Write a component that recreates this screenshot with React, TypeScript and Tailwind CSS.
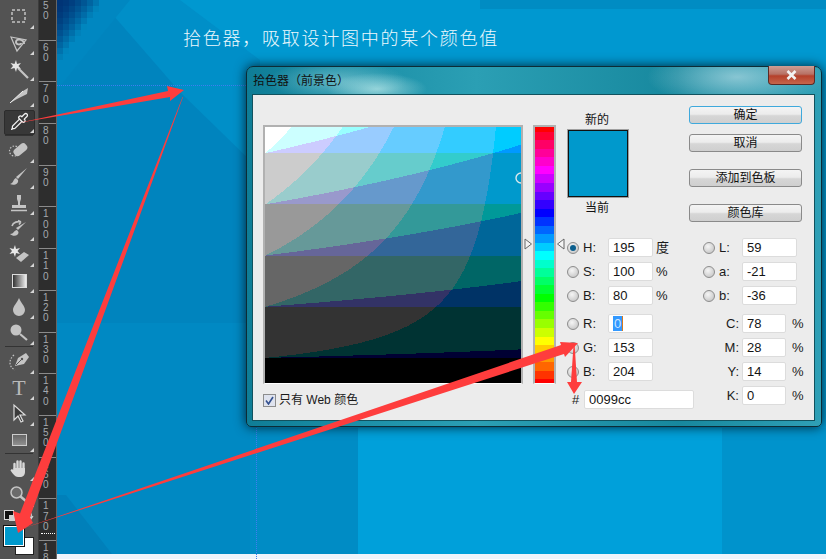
import { Pipette } from "lucide-react";
import type { ReactNode } from "react";

const quant = (v: number) => Math.round(v * 5) * 51;
const hex = (r: number, g: number, b: number) => `rgb(${r},${g},${b})`;

// web-safe colour field for H=195, built as one path per colour
const fieldPaths = () => {
  const map = new Map<string, string>();
  for (let y = 0; y < 256; y++) {
    const v = 1 - y / 256;
    let start = 0;
    let prev = "";
    for (let x = 0; x <= 256; x++) {
      const s = x / 256;
      const c = x === 256 ? "" : hex(quant(v * (1 - s)), quant(v * (1 - 0.25 * s)), quant(v));
      if (c !== prev) {
        if (prev) map.set(prev, (map.get(prev) ?? "") + `M${start} ${y}h${x - start}v1h-${x - start}z`);
        start = x;
        prev = c;
      }
    }
  }
  return [...map.entries()];
};

const hueRows = () => {
  const rows: { y: number; h: number; c: string }[] = [];
  for (let y = 0; y < 256; y++) {
    const h = ((256 - y) / 256) * 6;
    const x = 1 - Math.abs((h % 2) - 1);
    const t = [
      [1, x, 0],
      [x, 1, 0],
      [0, 1, x],
      [0, x, 1],
      [x, 0, 1],
      [1, 0, x],
    ][Math.min(5, Math.floor(h))];
    const c = hex(quant(t[0]), quant(t[1]), quant(t[2]));
    const last = rows[rows.length - 1];
    if (last && last.c === c) last.h += 1;
    else rows.push({ y, h: 1, c });
  }
  return rows;
};

const cornerBlocks = () => {
  const out: { x: number; y: number; c: string }[] = [];
  for (let y = 0; y < 63; y += 6) {
    for (let x = 57; x < 120; x += 6) {
      const d = (x - 57) / 42 + y / 58;
      if (d < 1) {
        const k = Math.pow(d, 1.6);
        out.push({ x, y, c: `rgb(0,${Math.round(52 + k * 84)},${Math.round(118 + k * 74)})` });
      }
    }
  }
  return out;
};

const Wallpaper = () => (
  <svg className="absolute inset-0 w-[769px] h-[554px]" viewBox="57 0 769 554" shapeRendering="crispEdges">
    <rect x="57" y="0" width="769" height="554" fill="#0098d0" />
    <rect x="480" y="0" width="346" height="9" fill="#008cc3" />
    <polygon points="57,0 100,0 260,170 260,323 57,323" fill="#0084be" shapeRendering="auto" />
    <polygon points="100,0 180,92 260,170 260,60 180,0" fill="#008fc8" shapeRendering="auto" />
    <polygon points="57,0 130,0 57,90" fill="#0087c1" shapeRendering="auto" />
    <rect x="57" y="323" width="200" height="231" fill="#0089c3" />
    <rect x="250" y="428" width="110" height="126" fill="#008cc5" />
    <rect x="358" y="428" width="364" height="126" fill="#00a0da" />
    <rect x="722" y="428" width="104" height="126" fill="#0093cc" />
    <polygon points="57,495 66,495 112,554 57,554" fill="#0080ba" shapeRendering="auto" />
    {cornerBlocks().map((b) => (
      <rect key={`${b.x}-${b.y}`} x={b.x} y={b.y} width="6" height="6" fill={b.c} />
    ))}
  </svg>
);

const Arrows = () => (
  <svg className="absolute left-0 top-0 w-[826px] h-[559px] pointer-events-none" viewBox="0 0 826 559">
    <g fill="#fe3d3d">
      <polygon points="18,123 168,91 167,86 184,90 170,101 170,97" />
      <polygon points="183,97 30,517 33,523 18,533 13,511 20,513.5 182.5,97" />
      <polygon points="18,530 561,345 560,342 578,343 565,357 564,354" />
      <polygon points="573.6,344 574.6,344 577,382 582,382 574,394 567,382 571,382" />
    </g>
  </svg>
);

const Tool = ({ children, active }: { children: ReactNode; active?: boolean }) => (
  <div className="relative h-[26px] w-full flex items-center justify-center">
    {active && <div className="absolute left-[4px] right-[3px] top-[2px] bottom-[-1px] bg-[#383838] border border-[#2c2c2c] rounded-[2px]" />}
    <span className="relative flex items-center justify-center text-[#c4c4c4]">{children}</span>
    <span className="absolute right-[4px] bottom-[1px] w-0 h-0 border-l-[4px] border-l-transparent border-b-[4px] border-b-[#d5d5d5]" />
  </div>
);

const Ico = ({ children }: { children: ReactNode }) => (
  <svg width="22" height="22" viewBox="0 0 22 22" fill="none" stroke="currentColor" strokeWidth="1.3">
    {children}
  </svg>
);

const Sep = () => <div className="mx-[5px] h-[2px] border-t border-[#333] border-b-[#666] shrink-0" />;

const Toolbar = () => (
  <div className="w-[39px] h-[559px] bg-[#535353] border-r border-[#3c3c3c] shrink-0 flex flex-col pt-[4px] relative">
    <Tool>
      <Ico>
        <rect x="4" y="4" width="13" height="12" strokeDasharray="3 2" strokeWidth="1.5" />
      </Ico>
    </Tool>
    <Tool>
      <Ico>
        <path d="M3 5 L18 8 L9 19 Z" strokeWidth="1.2" />
        <path d="M16 12 C16 7 8 6 8 10 C8 13 13 13 13 11" strokeWidth="2" />
      </Ico>
    </Tool>
    <Tool>
      <Ico>
        <path d="M10 10 L20 20" strokeWidth="2.2" />
        <path d="M8 2 L9 6 L13 5 L10.5 8 L13 11 L9 10 L8 14 L6.5 10 L2.5 11 L5 8 L2.5 5 L6.5 6 Z" fill="#e4e4e4" stroke="none" />
      </Ico>
    </Tool>
    <Tool>
      <Ico>
        <path d="M2 19 L15 7 L20 4 L19 10 L9 15 Z" fill="currentColor" stroke="none" />
        <path d="M2 19 L15 7" stroke="#eee" strokeWidth="1" />
      </Ico>
    </Tool>
    <Tool active>
      <Pipette size={19} strokeWidth={1.6} className="text-[#f0f0f0]" />
    </Tool>
    <div className="mt-[1px] mb-[1px]"><Sep /></div>
    <Tool>
      <Ico>
        <rect x="5" y="6" width="15" height="8" rx="3.5" transform="rotate(-40 12 10)" fill="currentColor" stroke="none" />
        <circle cx="6.5" cy="11" r="5" strokeDasharray="1.5 1.5" strokeWidth="1.2" />
      </Ico>
    </Tool>
    <Tool>
      <Ico>
        <path d="M19 2 L10 13 L8 11 Z" fill="currentColor" stroke="none" />
        <path d="M8 12 C5 13 6 17 2 18 C6 20 11 18 10 14 Z" fill="currentColor" stroke="none" />
      </Ico>
    </Tool>
    <Tool>
      <Ico>
        <path d="M9 3 h4 v4 l-1 3 v3 h6 v3 H4 v-3 h6 v-3 l-1 -3 Z" fill="currentColor" stroke="none" />
        <path d="M3 18.5 H19" strokeWidth="1.5" />
      </Ico>
    </Tool>
    <Tool>
      <Ico>
        <path d="M18 4 L10 12 L8 10 Z" fill="currentColor" stroke="none" />
        <path d="M9 12 C6 12 6 16 2 16 C5 19 11 18 10.5 14 Z" fill="currentColor" stroke="none" />
        <path d="M4 8 C5 4 10 3 13 4 M13 4 L10 2.5 M13 4 L11 6.5" strokeWidth="1.6" />
      </Ico>
    </Tool>
    <Tool>
      <Ico>
        <path d="M7 1 L8 5 L12 4 L9.5 7 L12 10 L8 9 L7 13 L5.5 9 L1.5 10 L4 7 L1.5 4 L5.5 5 Z" fill="#e8e8e8" stroke="none" />
        <path d="M8 14 L16 8 L21 11 L13 18 Z" fill="currentColor" stroke="none" />
      </Ico>
    </Tool>
    <Tool>
      <div className="w-[15px] h-[14px] border border-[#ddd] bg-[linear-gradient(90deg,#333,#eee)]" />
    </Tool>
    <Tool>
      <Ico>
        <path d="M11 2 C13 7 17 10 17 14 A6 6 0 0 1 5 14 C5 10 9 7 11 2 Z" fill="currentColor" stroke="none" />
      </Ico>
    </Tool>
    <Tool>
      <Ico>
        <circle cx="8" cy="8" r="5.5" fill="currentColor" stroke="none" />
        <path d="M12 12 L19 18" strokeWidth="2.2" />
      </Ico>
    </Tool>
    <Sep />
    <div className="mt-[1px]" />
    <Tool>
      <Ico>
        <path d="M7 15 L10 7 L18 2 L21 6 L16 13 Z" fill="currentColor" stroke="none" />
        <path d="M8 14 L14 8" stroke="#535353" strokeWidth="1" />
        <circle cx="14" cy="8" r="1.2" fill="#535353" stroke="none" />
        <path d="M6 4 C0 9 1 16 7 19" strokeDasharray="1.5 1.5" strokeWidth="1.2" />
      </Ico>
    </Tool>
    <Tool>
      <span className="font-['Liberation_Serif',serif] text-[22px] leading-none text-[#b9b9b9]">T</span>
    </Tool>
    <Tool>
      <Ico>
        <path d="M6 2 L6 17 L10 13 L13 19 L15 18 L12 12 L17 12 Z" stroke="#ddd" fill="#3a3a3a" strokeWidth="1.2" />
      </Ico>
    </Tool>
    <Tool>
      <div className="w-[15px] h-[12px] border border-[#ccc] bg-[linear-gradient(180deg,#666,#8f8f8f)]" />
    </Tool>
    <Sep />
    <div className="mt-[1px]" />
    <Tool>
      <Ico>
        <path d="M6.5 12 V6 M9.5 11 V3.5 M12.5 11 V3.5 M15.5 11.5 V5.5" strokeWidth="2.4" strokeLinecap="round" stroke="#d8d8d8" />
        <path d="M5.5 10 H17 V14 C17 17 15 19 12 19 H10 C7 19 5 16 2.5 12.5 C3 11 4.5 11 5.5 12 Z" fill="#d8d8d8" stroke="none" />
      </Ico>
    </Tool>
    <Tool>
      <Ico>
        <circle cx="8.5" cy="8.5" r="5.5" fill="#6b6b6b" stroke="currentColor" strokeWidth="1.5" />
        <path d="M12.5 12.5 L19 18" strokeWidth="2.4" />
      </Ico>
    </Tool>
    {/* default + swap icons */}
    <div className="absolute left-[4px] top-[510px] w-[10px] h-[10px] bg-[#111] border border-[#ddd]" />
    <div className="absolute left-[9px] top-[515px] w-[6px] h-[6px] bg-[#d0d0d0]" />
    <svg className="absolute left-[25px] top-[509px]" width="9" height="12" viewBox="0 0 9 12" fill="none" stroke="#d5d5d5" strokeWidth="1.2">
      <path d="M1 2 C6 2 7 5 6 9 M4 7 L6 10 L8 7" />
    </svg>
    <div className="absolute left-[15px] top-[537px] w-[19px] h-[18px] bg-white border border-[#222]" />
    <div className="absolute left-[4px] top-[526px] w-[20px] h-[20px] bg-[#0099cc] border border-white outline outline-[#111]" />
  </div>
);

const marks = ["50", "60", "70", "80", "90", "100", "110", "120", "130", "140", "150", "160", "170", "18"];

const Ruler = () => (
  <div className="w-[18px] h-[559px] bg-[#2d2d2d] shrink-0 overflow-hidden relative">
    <div className="-mt-[2px] flex flex-col">
      {marks.map((m) => (
        <div key={m} className="h-[41.7px] border-t border-[#8a8a8a] pl-[4px] pt-[2px] shrink-0 flex flex-col text-[10px] leading-[10.3px] text-[#a4a9ad]">
          {m.split("").map((d, i) => (
            <span key={i}>{d}</span>
          ))}
        </div>
      ))}
    </div>
    <div className="absolute left-[2px] right-0 top-[533px] border-t border-dotted border-white" />
  </div>
);

const Field = ({ value, w = "w-[45px]", selected }: { value: string; w?: string; selected?: boolean }) => (
  <div className={`${w} h-[19px] bg-white border border-[#dcdcdc] rounded-[2px] flex items-center pl-[4px] text-[13px] text-[#141414] shrink-0`}>
    {selected ? <span className="bg-[#3399ff] text-[#cfe6ff] px-[1px] border-r border-[#d97a1e] leading-[15px]">{value}</span> : value}
  </div>
);

const Radio = ({ on }: { on?: boolean }) => (
  <span className="w-[12px] h-[12px] rounded-full border border-[#8d8d8d] bg-[radial-gradient(circle_at_40%_35%,#f5f5f5,#bdbdbd)] flex items-center justify-center shrink-0">
    {on && <span className="w-[6px] h-[6px] rounded-full bg-[#0b5f8e]" />}
  </span>
);

const HsbRow = ({ on, label, value, unit, selected }: { on?: boolean; label: string; value: string; unit?: string; selected?: boolean }) => (
  <div className="flex items-center h-[19px]">
    <Radio on={on} />
    <span className="ml-[4px] w-[25px] text-[13px] text-[#1b1b1b]">{label}</span>
    <Field value={value} selected={selected} />
    {unit && <span className="ml-[3px] text-[13px] text-[#1b1b1b]">{unit}</span>}
  </div>
);

const LabRow = ({ label, value }: { label: string; value: string }) => (
  <div className="flex items-center h-[19px]">
    <Radio />
    <span className="ml-[4px] w-[23px] text-[13px] text-[#1b1b1b]">{label}</span>
    <Field value={value} w="w-[55px]" />
  </div>
);

const CmykRow = ({ label, value }: { label: string; value: string }) => (
  <div className="flex items-center h-[19px]">
    <span className="w-[36px] text-right text-[13px] text-[#1b1b1b]">{label}</span>
    <span className="w-[3px]" />
    <Field value={value} w="w-[44px]" />
    <span className="ml-[6px] text-[13px] text-[#1b1b1b]">%</span>
  </div>
);

const Btn = ({ children, primary, className = "" }: { children: ReactNode; primary?: boolean; className?: string }) => (
  <button
    type="button"
    className={`w-[113px] h-[18px] rounded-[3px] border text-[12px] leading-[16px] text-[#111] bg-[linear-gradient(180deg,#f4f4f4_0%,#ececec_45%,#d6d6d6_55%,#cfcfcf_100%)] ${primary ? "border-[#3fa9dc]" : "border-[#8a8a8a]"} ${className}`}
  >
    {children}
  </button>
);

const Picker = () => (
  <div className="absolute left-[189px] top-[66px] w-[576px] h-[361px] rounded-t-[7px] rounded-b-[5px] border border-[#0c2c36] shadow-[0_0_12px_rgba(0,0,0,0.75)] pt-[27px] pl-[5px] pr-[6px] pb-[5px] bg-[radial-gradient(ellipse_50px_16px_at_130px_22px,rgba(190,235,235,0.7),transparent),radial-gradient(ellipse_70px_20px_at_90px_14px,rgba(170,225,230,0.5),transparent),radial-gradient(ellipse_90px_30px_at_490px_10px,rgba(170,215,225,0.75),transparent),linear-gradient(90deg,#0f7d96_0%,#1c90a8_20%,#2b9fb4_40%,#17889e_75%,#2fa0b6_100%)]">
    <span className="absolute left-[6px] top-[4px] text-[12px] leading-[18px] text-[#111] font-['Noto_Sans_CJK_TC',sans-serif]">拾色器（前景色）</span>
    {/* close */}
    <div className="absolute right-[6px] -top-[1px] w-[47px] h-[19px] rounded-b-[4px] border border-[#5b2a25] border-t-0 bg-[linear-gradient(180deg,#cf9e94_0%,#b77164_45%,#b5402a_55%,#c6664c_100%)] flex items-center justify-center">
      <svg width="11" height="10" viewBox="0 0 11 10">
        <path d="M1.5 1 L9.5 9 M9.5 1 L1.5 9" stroke="#f2f2f2" strokeWidth="2.6" />
      </svg>
    </div>
    <div className="w-full h-full bg-[#ececec] border border-[#12525e] flex items-start pl-[10px] relative">
      {/* left column */}
      <div className="w-[260px] mt-[30px] shrink-0">
        <div className="border-x-2 border-t-2 border-[#b1b1b1] border-b border-b-white w-[260px]">
          <svg width="256" height="256" viewBox="0 0 256 256" className="block overflow-hidden" shapeRendering="crispEdges">
            {fieldPaths().map(([c, d]) => (
              <path key={c} d={d} fill={c} />
            ))}
            <circle cx="256" cy="51" r="5" fill="none" stroke="#d8e8ee" strokeWidth="1.4" shapeRendering="auto" />
          </svg>
        </div>
        <label className="flex items-center mt-[9px] h-[14px] text-[12px] text-[#1a1a1a]">
          <span className="w-[13px] h-[13px] border border-[#8d8d8d] bg-[#dfe3ee] flex items-center justify-center shrink-0">
            <svg width="9" height="9" viewBox="0 0 9 9" fill="none">
              <path d="M1 4.5 L3.5 8 L8 1" stroke="#34508f" strokeWidth="1.6" />
            </svg>
          </span>
          <span className="ml-[3px]">只有 Web 颜色</span>
        </label>
      </div>
      {/* hue slider */}
      <div className="relative ml-[10px] mt-[30px] w-[23px] shrink-0">
        <div className="border-x-2 border-t-2 border-[#b1b1b1] border-b border-b-white w-[23px]">
          <svg width="19" height="256" viewBox="0 0 19 256" className="block" shapeRendering="crispEdges">
            {hueRows().map((r) => (
              <rect key={r.y} x="0" y={r.y} width="19" height={r.h} fill={r.c} />
            ))}
          </svg>
        </div>
        <svg className="absolute -left-[9px] top-[113px]" width="9" height="12" viewBox="0 0 9 12">
          <path d="M1 1 L7.5 6 L1 11 Z" fill="#f4f4f4" stroke="#666" />
        </svg>
        <svg className="absolute -right-[9px] top-[113px]" width="9" height="12" viewBox="0 0 9 12">
          <path d="M8 1 L1.5 6 L8 11 Z" fill="#f4f4f4" stroke="#666" />
        </svg>
      </div>
      {/* right side */}
      <div className="ml-[11px] mt-[11px] w-[235px] shrink-0">
        <div className="h-[132px] flex justify-between">
          <div className="w-[62px] mt-[5px] flex flex-col items-center text-[12px] text-[#111]">
            <span className="h-[18px] leading-[18px] -translate-x-[1px]">新的</span>
            <div className="w-[60px] h-[67px] mt-[1px] bg-[#0099cc] border border-[#111] outline outline-[#a0a0a0]" />
            <span className="h-[20px] mt-[1px] leading-[20px] -translate-x-[1px]">当前</span>
          </div>
          <div className="flex flex-col">
            <Btn primary>确定</Btn>
            <Btn className="mt-[10px]">取消</Btn>
            <Btn className="mt-[17px]">添加到色板</Btn>
            <Btn className="mt-[17px]">颜色库</Btn>
          </div>
        </div>
        <div className="flex">
          <div className="w-[136px] shrink-0 flex flex-col gap-[5px]">
            <HsbRow on label="H:" value="195" unit="度" />
            <HsbRow label="S:" value="100" unit="%" />
            <HsbRow label="B:" value="80" unit="%" />
            <div className="mt-[4px]">
              <HsbRow label="R:" value="0" selected />
            </div>
            <HsbRow label="G:" value="153" />
            <HsbRow label="B:" value="204" />
            <div className="flex items-center h-[19px] mt-[4px]">
              <span className="w-[17px] pl-[5px] text-[13px] text-[#1b1b1b]">#</span>
              <Field value="0099cc" w="w-[110px]" />
            </div>
          </div>
          <div className="flex-1 flex flex-col gap-[5px]">
            <LabRow label="L:" value="59" />
            <LabRow label="a:" value="-21" />
            <LabRow label="b:" value="-36" />
            <div className="mt-[4px]">
              <CmykRow label="C:" value="78" />
            </div>
            <CmykRow label="M:" value="28" />
            <CmykRow label="Y:" value="14" />
            <CmykRow label="K:" value="0" />
          </div>
        </div>
      </div>
    </div>
  </div>
);

export default function App() {
  return (
    <div className="relative w-[826px] h-[559px] overflow-hidden flex bg-[#eef4fb] font-['Liberation_Sans','Noto_Sans_CJK_SC',sans-serif]">
      <Toolbar />
      <Ruler />
      <div className="w-[769px] h-[559px] relative border-l border-[#666] box-content -ml-[1px] shrink-0">
        <Wallpaper />
        <div className="absolute left-0 w-[189px] top-[85px] border-t border-dotted border-[#3f7df0]" />
        <div className="absolute left-[199px] top-[428px] h-[131px] border-l border-dotted border-[#3f7df0]" />
        <h1 className="absolute left-[126px] top-[26px] text-[18px] leading-[26px] font-light tracking-[1.75px] text-[#eef8fd] whitespace-nowrap">
          拾色器，吸取设计图中的某个颜色值
        </h1>
        <Picker />
      </div>
      <Arrows />
    </div>
  );
}
